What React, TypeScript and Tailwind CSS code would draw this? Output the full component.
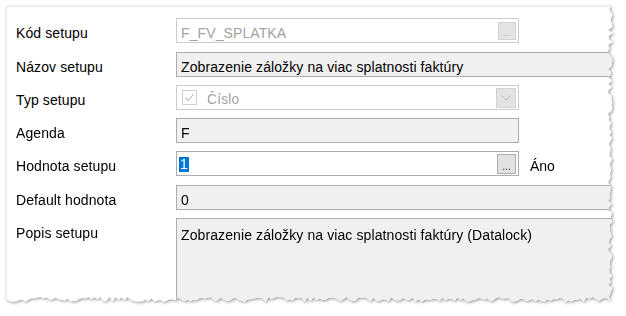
import * as React from 'react';

const font = { fontFamily: '"Liberation Sans", Arial, sans-serif' };

// deterministic "torn paper" outline for the right and bottom edges
const makeRng = (seed: number) => {
    let s = seed;
    return () => {
        s = (s * 1103515245 + 12345) & 0x7fffffff;
        return s / 0x7fffffff;
    };
};

const tornClip = (() => {
    const rand = makeRng(7);
    const W = 604.5;
    const H = 293.5;
    const pts: string[] = ['0px 0px'];
    for (let y = 0; y < H; y += 3) {
        pts.push(`${(W + (rand() - 0.5) * 5).toFixed(1)}px ${y}px`);
    }
    for (let x = W; x >= 0; x -= 3) {
        pts.push(`${x}px ${(H + (rand() - 0.5) * 5).toFixed(1)}px`);
    }
    pts.push(`0px ${H}px`);
    return `polygon(${pts.join(', ')})`;
})();

const Label = ({ children }: { children: React.ReactNode }) => (
    <div className="w-[160px] shrink-0 pt-[7px] text-[14px] leading-[16px] tracking-[0.1px] text-black">{children}</div>
);

const DotsButton = ({ disabled }: { disabled?: boolean }) => (
    <div
        className={
            disabled
                ? 'w-[18px] h-[18px] border border-[#d2d2d2] bg-[#e4e4e4] flex items-end justify-center text-[10px] leading-[12px] text-[#b4b4b4]'
                : 'w-[19px] h-[20px] border border-[#adadad] bg-[#e1e1e1] flex items-end justify-center text-[10px] leading-[13px] text-[#333333]'
        }
    >
        ...
    </div>
);

export default function App() {
    return (
        <div className="w-[626px] h-[316px] bg-white overflow-hidden" style={font}>
            <div className="pl-[6px] pt-[6px] [filter:drop-shadow(1px_1px_1.5px_rgba(0,0,0,0.4))]">
                <div
                    className="w-[612px] h-[300px] bg-white border-t border-l border-[#ececec] pl-[9px] pt-[11px] flex flex-col"
                    style={{ clipPath: tornClip }}
                >
                    {/* Kód setupu */}
                    <div className="flex h-[25px] mb-[9px]">
                        <Label>Kód setupu</Label>
                        <div className="w-[343px] h-[25px] border border-[#cccccc] bg-white flex items-center justify-between pl-[4px] pr-[2px]">
                            <span className="text-[14px] leading-[16px] pt-[4px] tracking-[0.1px] text-[#a2a2a2]">F_FV_SPLATKA</span>
                            <DotsButton disabled />
                        </div>
                    </div>

                    {/* Názov setupu */}
                    <div className="flex h-[25px] mb-[8px]">
                        <Label>Názov setupu</Label>
                        <div className="flex-1 h-[25px] border border-[#adadad] bg-[#f0f0f0] flex items-center pl-[4px]">
                            <span className="text-[14px] leading-[16px] pt-[4px] tracking-[0.1px] text-black whitespace-nowrap">
                                Zobrazenie záložky na viac splatnosti faktúry
                            </span>
                        </div>
                    </div>

                    {/* Typ setupu */}
                    <div className="flex h-[25px] mb-[8px]">
                        <Label>Typ setupu</Label>
                        <div className="w-[343px] h-[25px] border border-[#cccccc] bg-white flex items-center pl-[5px] pr-[2px]">
                            <div className="w-[15px] h-[15px] border border-[#d0d0d0] flex items-center justify-center">
                                <svg width="11" height="11" viewBox="0 0 11 11">
                                    <path d="M1.5 5.8 L4.2 8.5 L9.6 2.2" fill="none" stroke="#c4c4c4" strokeWidth="1.2" />
                                </svg>
                            </div>
                            <span className="ml-[10px] text-[14px] leading-[16px] pt-[3px] tracking-[0.1px] text-[#a2a2a2]">Číslo</span>
                            <div className="ml-auto w-[20px] h-[20px] border border-[#d2d2d2] bg-[#e3e3e3] flex items-center justify-center">
                                <svg width="10" height="6" viewBox="0 0 10 6">
                                    <path d="M0.5 0.5 L5 5 L9.5 0.5" fill="none" stroke="#bdbdbd" strokeWidth="1" />
                                </svg>
                            </div>
                        </div>
                    </div>

                    {/* Agenda */}
                    <div className="flex h-[25px] mb-[8px]">
                        <Label>Agenda</Label>
                        <div className="w-[343px] h-[25px] border border-[#adadad] bg-[#f0f0f0] flex items-center pl-[4px]">
                            <span className="text-[14px] leading-[16px] pt-[4px] text-black">F</span>
                        </div>
                    </div>

                    {/* Hodnota setupu */}
                    <div className="flex h-[25px] mb-[9px]">
                        <Label>Hodnota setupu</Label>
                        <div className="w-[343px] h-[25px] border border-[#adadad] bg-white flex items-center pl-[2px] pr-[2px]">
                            <span className="bg-[#0078d7] text-white text-[14px] leading-[15px] px-[1px] mt-[2px]">1</span>
                            <div className="ml-auto">
                                <DotsButton />
                            </div>
                        </div>
                        <div className="ml-[11px] pt-[7px] text-[14px] leading-[16px] text-black">Áno</div>
                    </div>

                    {/* Default hodnota */}
                    <div className="flex h-[25px] mb-[8px]">
                        <Label>Default hodnota</Label>
                        <div className="flex-1 h-[25px] border border-[#adadad] bg-[#f0f0f0] flex items-center pl-[4px]">
                            <span className="text-[14px] leading-[16px] pt-[4px] text-black">0</span>
                        </div>
                    </div>

                    {/* Popis setupu */}
                    <div className="flex">
                        <Label>Popis setupu</Label>
                        <div className="flex-1 h-[110px] border border-[#adadad] bg-[#f0f0f0] pl-[4px] pt-[4px]">
                            <span className="text-[14px] leading-[16px] tracking-[0.1px] text-black whitespace-nowrap">
                                Zobrazenie záložky na viac splatnosti faktúry (Datalock)
                            </span>
                        </div>
                    </div>
                </div>
            </div>
        </div>
    );
}
